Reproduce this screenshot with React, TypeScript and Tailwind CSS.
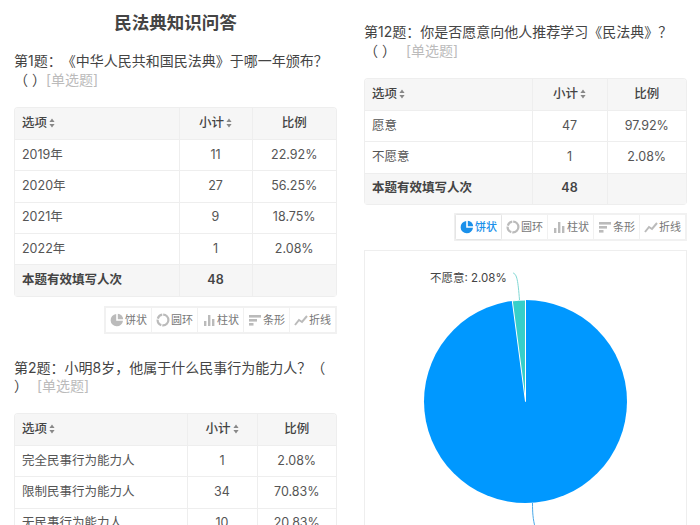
const font = "font-['Inter','Noto_Sans_CJK_SC',sans-serif] [text-spacing-trim:space-all]";

function SortIcon() {
  return (
    <svg viewBox="0 0 6 10" className="ml-[2px] inline-block h-[10px] w-[6px] align-[-1px]">
      <path d="M3 0.5 L5.6 4 H0.4 Z M3 9.5 L0.4 6 H5.6 Z" fill="#888" />
    </svg>
  );
}

function PieIcon({ active }: { active?: boolean }) {
  return (
    <svg viewBox="0 0 14 14" className="h-[14px] w-[14px]">
      <path d="M6.2 1 A6.2 6.2 0 1 0 13 7.8 H6.2 Z" fill={active ? "#1a90ea" : "#bbb"} />
      <path d="M7.8 0.8 A5.6 5.6 0 0 1 13.2 6.2 H7.8 Z" fill={active ? "#1a90ea" : "#bbb"} />
    </svg>
  );
}

function RingIcon() {
  return (
    <svg viewBox="0 0 14 14" className="h-[14px] w-[14px]">
      <circle cx="7" cy="7" r="5.4" fill="none" stroke="#bbb" strokeWidth="2.2" strokeDasharray="9 1 7 1 6 1 8 1" />
    </svg>
  );
}

function BarIcon() {
  return (
    <svg viewBox="0 0 14 14" className="h-[14px] w-[14px]" fill="#bbb">
      <rect x="2" y="8" width="2.4" height="5" />
      <rect x="6" y="2" width="2.4" height="11" />
      <rect x="10" y="6" width="2.4" height="7" />
    </svg>
  );
}

function HBarIcon() {
  return (
    <svg viewBox="0 0 14 14" className="h-[14px] w-[14px]" fill="#bbb">
      <rect x="1" y="2" width="12" height="2.6" />
      <rect x="1" y="6" width="8" height="2.6" />
      <rect x="1" y="10" width="4.5" height="2.6" />
    </svg>
  );
}

function LineIcon() {
  return (
    <svg viewBox="0 0 14 14" className="h-[14px] w-[14px]">
      <path d="M1 12 L5 7 L8 9 L13 3" fill="none" stroke="#bbb" strokeWidth="2" />
    </svg>
  );
}

function ChartTabs({ active }: { active?: boolean }) {
  const tabs = [
    { label: "饼状", icon: <PieIcon active={active} /> },
    { label: "圆环", icon: <RingIcon /> },
    { label: "柱状", icon: <BarIcon /> },
    { label: "条形", icon: <HBarIcon /> },
    { label: "折线", icon: <LineIcon /> },
  ];
  return (
    <div className="ml-auto flex h-[28px] w-[233px] gap-[1px] bg-[#f1f1f1] p-[2px]">
      {tabs.map((tab, i) => (
        <div
          key={tab.label}
          className={`flex flex-1 items-center justify-center gap-[1px] bg-white text-[11px] ${
            active && i === 0 ? "font-medium text-[#1a90ea] shadow-[0_0_2px_#ccc]" : "text-[#777]"
          }`}
        >
          {tab.icon}
          <span>{tab.label}</span>
        </div>
      ))}
    </div>
  );
}

type TableProps = {
  rows: [string, string, string][];
  total?: string;
  first: string;
  second: string;
};

function StatTable({ rows, total, first, second }: TableProps) {
  const cell = "border-b border-r border-[#eeeeee] px-0 h-[31.4px]";
  return (
    <div className="overflow-hidden rounded-[4px] border border-b-0 border-[#eeeeee]">
      <table className="w-full table-fixed border-collapse text-[12.5px] text-[#555]">
        <colgroup>
          <col className={first} />
          <col className={second} />
          <col />
        </colgroup>
        <thead>
          <tr className="bg-[#f6f6f6] font-medium text-[#444]">
            <th className={`${cell} pl-[7px] text-left font-medium`}>
              选项
              <SortIcon />
            </th>
            <th className={`${cell} text-center font-medium`}>
              小计
              <SortIcon />
            </th>
            <th className={`${cell} border-r-0 text-center font-medium`}>比例</th>
          </tr>
        </thead>
        <tbody>
          {rows.map((row) => (
            <tr key={row[0]}>
              <td className={`${cell} pl-[7px]`}>{row[0]}</td>
              <td className={`${cell} text-center`}>{row[1]}</td>
              <td className={`${cell} border-r-0 text-center`}>{row[2]}</td>
            </tr>
          ))}
          {total && (
            <tr className="bg-[#f6f6f6] font-semibold text-[#444]">
              <td className={`${cell} pl-[7px]`}>本题有效填写人次</td>
              <td className={`${cell} text-center`}>{total}</td>
              <td className={`${cell} border-r-0`}></td>
            </tr>
          )}
        </tbody>
      </table>
    </div>
  );
}

function Question({ text, gap, narrow }: { text: string; gap: string; narrow?: boolean }) {
  return (
    <p className={`text-[14px] leading-[18.5px] text-[#444] ${narrow ? "pr-[10px]" : ""}`}>
      {text}（ ）<span className={`${gap} text-[#bbb]`}>[单选题]</span>
    </p>
  );
}

function PieChart() {
  return (
    <div className="h-[276px] overflow-hidden border border-[#eeeeee] bg-white">
      <svg viewBox="0 0 322 275" className="block h-[275px] w-[322px]">
        <circle cx="160.5" cy="150.5" r="101.5" fill="#0098ff" />
        <path d="M160.5 150.5 L147.3 49.9 A101.5 101.5 0 0 1 160.5 49 Z" fill="#36cfc9" stroke="#fff" strokeWidth="1" />
        <path d="M148 22 C152 23 153 30 154.5 49" fill="none" stroke="#7fd8d4" strokeWidth="1" />
        <path d="M167.5 252 C167.5 262 168 268 170 276" fill="none" stroke="#4aa8e8" strokeWidth="1" />
        <text x="65" y="30.5" fontSize="11.5" fill="#444">不愿意: 2.08%</text>
      </svg>
    </div>
  );
}

export default function App() {
  return (
    <div className={`${font} flex h-[525px] w-[700px] gap-[27px] overflow-hidden bg-white pl-[14px]`}>
      <div className="w-[323px] shrink-0">
        <h1 className="mt-[10px] text-center text-[17.5px] leading-[26px] font-semibold text-[#444]">民法典知识问答</h1>
        <div className="mt-[16px]">
          <Question text="第1题：《中华人民共和国民法典》于哪一年颁布？" gap="" />
        </div>
        <div className="mt-[18px]">
          <StatTable
            first="w-[164px]"
            second="w-[73px]"
            total="48"
            rows={[
              ["2019年", "11", "22.92%"],
              ["2020年", "27", "56.25%"],
              ["2021年", "9", "18.75%"],
              ["2022年", "1", "2.08%"],
            ]}
          />
        </div>
        <div className="mt-[9px]">
          <ChartTabs />
        </div>
        <div className="mt-[25px]">
          <Question text="第2题：小明8岁，他属于什么民事行为能力人？" gap="ml-[9px]" />
        </div>
        <div className="mt-[17px]">
          <StatTable
            first="w-[172px]"
            second="w-[70px]"
            rows={[
              ["完全民事行为能力人", "1", "2.08%"],
              ["限制民事行为能力人", "34", "70.83%"],
              ["无民事行为能力人", "10", "20.83%"],
            ]}
          />
        </div>
      </div>
      <div className="w-[323px] shrink-0">
        <div className="mt-[23px]">
          <Question text="第12题：你是否愿意向他人推荐学习《民法典》？" gap="ml-[10px]" narrow />
        </div>
        <div className="mt-[18px]">
          <StatTable
            first="w-[167px]"
            second="w-[75px]"
            total="48"
            rows={[
              ["愿意", "47", "97.92%"],
              ["不愿意", "1", "2.08%"],
            ]}
          />
        </div>
        <div className="mt-[8px]">
          <ChartTabs active />
        </div>
        <div className="mt-[9px]">
          <PieChart />
        </div>
      </div>
    </div>
  );
}
